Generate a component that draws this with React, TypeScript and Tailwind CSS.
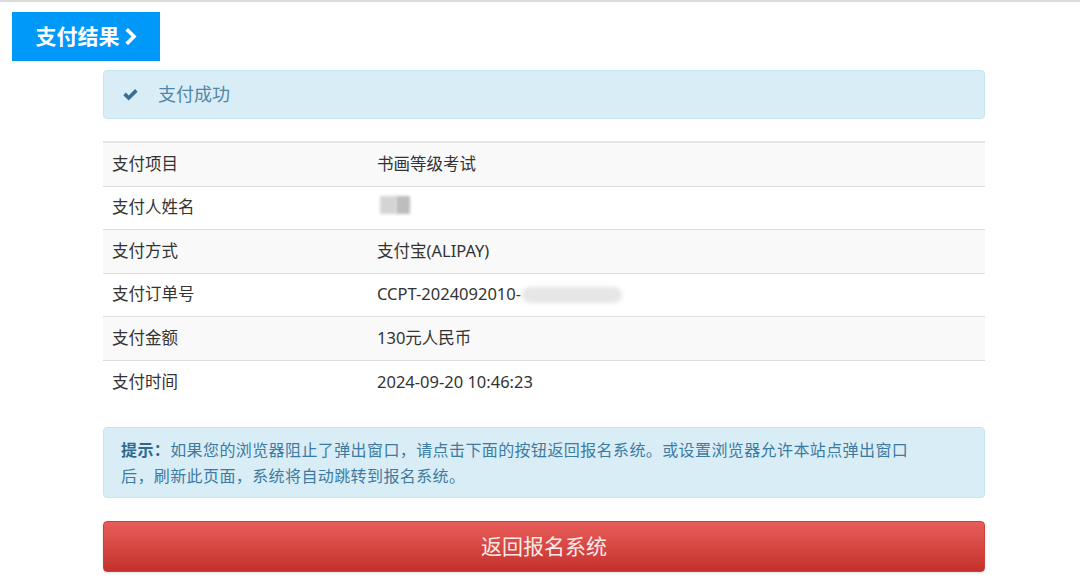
import React from "react";

const rows: { label: string; value: React.ReactNode }[] = [
  { label: "支付项目", value: "书画等级考试" },
  {
    label: "支付人姓名",
    value: (
      <span className="inline-flex items-center h-[22px] pl-[3px]">
        <span className="w-[16px] h-[18px] bg-[#d4d4d4] blur-[1.5px]" />
        <span className="w-[14px] h-[18px] bg-[#bdbdbd] blur-[1.5px]" />
      </span>
    ),
  },
  { label: "支付方式", value: "支付宝(ALIPAY)" },
  {
    label: "支付订单号",
    value: (
      <span className="inline-flex items-center">
        CCPT-2024092010-
        <span className="ml-[1px] w-[100px] h-[16px] rounded-full bg-[#e6e6e6] blur-[2px]" />
      </span>
    ),
  },
  { label: "支付金额", value: "130元人民币" },
  { label: "支付时间", value: "2024-09-20 10:46:23" },
];

export default function App() {
  return (
    <div
      className="min-h-[580px] bg-white border-t-2 border-[#dcdcdc] text-[16.5px] text-[#333]"
      style={{ fontFamily: '"Noto Sans", "Noto Sans CJK SC", sans-serif' }}
    >
      {/* Tab */}
      <div className="pt-[10px] pl-[12px]">
        <div className="inline-flex items-center gap-[5px] h-[49px] w-[148px] justify-center bg-[#0099f9] text-white text-[21px] font-bold">
          <span>支付结果</span>
          <svg viewBox="0 0 12 16" className="w-[12px] h-[17px]" fill="none">
            <path d="M3 2l6 6-6 6" stroke="currentColor" strokeWidth="3.6" strokeLinecap="square" />
          </svg>
        </div>
      </div>

      <div className="ml-[103px] w-[882px]">
        {/* Success alert */}
        <div className="mt-[9px] h-[49px] flex items-center rounded-[4px] border border-[#c7e5f0] bg-[#d9edf7] text-[#5186a6] text-[18px]">
          <svg viewBox="0 0 16 16" className="ml-[18px] w-[17px] h-[17px]" fill="#3a6f92">
            <path d="M1.2 8.6l2.4-2.4 2.7 2.7 6-6 2.4 2.4-8.4 8.4z" />
          </svg>
          <span className="ml-[19px]">支付成功</span>
        </div>

        {/* Table */}
        <div className="mt-[22px] border-t-2 border-[#e6e6e6]">
          {rows.map((r, i) => (
            <div
              key={r.label}
              className={`flex items-center h-[43.5px] ${i < rows.length - 1 ? "border-b border-[#dedede]" : ""} ${i % 2 === 0 ? "bg-[#f9f9f9]" : "bg-white"}`}
            >
              <div className="w-[274px] pl-[9px] shrink-0">{r.label}</div>
              <div>{r.value}</div>
            </div>
          ))}
        </div>

        {/* Hint */}
        <div className="mt-[23px] rounded-[4px] border border-[#c7e5f0] bg-[#d9edf7] text-[#3d7ba0] text-[16px] tracking-[0.4px] leading-[26px] pl-[17px] pr-[15px] pt-[9px] pb-[8px]">
          <b className="text-[#2f6a8e]">提示：</b>如果您的浏览器阻止了弹出窗口，请点击下面的按钮返回报名系统。或设置浏览器允许本站点弹出窗口
          <br />
          后，刷新此页面，系统将自动跳转到报名系统。
        </div>

        {/* Button */}
        <button className="mt-[23px] w-full h-[51px] rounded-[4px] border border-[#c9403c] bg-linear-to-b from-[#e85d59] to-[#c4302c] text-[#fbe9e8] text-[21px] shadow-sm">
          返回报名系统
        </button>
      </div>
    </div>
  );
}
